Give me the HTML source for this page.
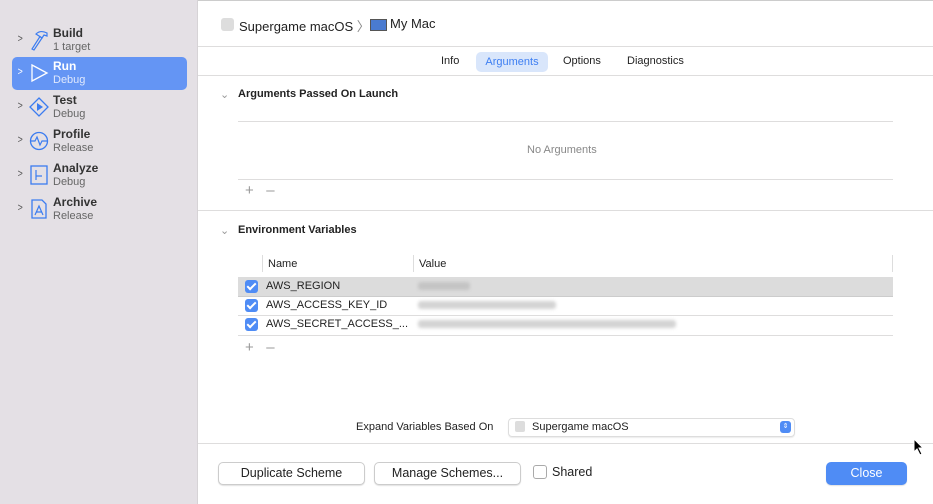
<!DOCTYPE html>
<html><head><style>
body{margin:0;width:933px;height:504px;overflow:hidden;font-family:"Liberation Sans",sans-serif;background:#fff;position:relative;color:#222}
.a{position:absolute}
.side{left:0;top:0;width:197px;height:504px;background:#e4e0e5;border-right:1px solid #d6d3d6}
.it{position:absolute;left:12px;width:175px;height:33px;border-radius:5px}
.it .t{position:absolute;left:41px;top:2px;font-size:12px;font-weight:bold;color:#333}
.it .s{position:absolute;left:41px;top:17px;font-size:11px;color:#666}
.it .c{position:absolute;left:5px;top:9px;font-size:11px;color:#555;transform:scaleX(.8)}
.it svg{position:absolute;left:17px;top:5px}
.sel{background:#6495f4}
.sel .t,.sel .s,.sel .c{color:#fff}
.sel .s{color:#dfe8fd}
.hl{background:#dedddd;height:1px}
.f12{font-size:12px}
.f11{font-size:11px}
.btn{position:absolute;top:462px;height:21px;border:1px solid #ccc;border-radius:5px;background:#fff;box-shadow:0 1px 1px rgba(0,0,0,.12);font-size:12.5px;text-align:center;line-height:21px;color:#222}
.cb{position:absolute;left:245px;width:13px;height:13px;background:#4f8cf5;border-radius:3px}
.cb:after{content:"";position:absolute;left:4px;top:1px;width:3px;height:7px;border:solid #fff;border-width:0 2px 2px 0;transform:rotate(45deg)}
.blur{position:absolute;height:8px;background:#d4d4d4;filter:blur(1.5px);border-radius:3px}
</style></head><body>
<div class="a" style="left:0;top:0;width:933px;height:1px;background:#ccc"></div>
<div class="a side"></div>
<div class="it" style="top:24px"><span class="c">&gt;</span><svg width="20" height="22" viewBox="0 0 20 22"><path d="M3 20 L5 21 L13 9 L11 7.5 Z" fill="none" stroke="#3b7cf0" stroke-width="1.2"/><path d="M7 5 C10 2 14 2 18 4 L18 7 L15 6 L13 9 L10 7 Z" fill="none" stroke="#3b7cf0" stroke-width="1.2"/></svg><div class="t">Build</div><div class="s">1 target</div></div>
<div class="it sel" style="top:57px"><span class="c">&gt;</span><svg width="20" height="22" viewBox="0 0 20 22"><path d="M3 3 L18 11 L3 19 Z" fill="none" stroke="#fff" stroke-width="1.3"/></svg><div class="t">Run</div><div class="s">Debug</div></div>
<div class="it" style="top:91px"><span class="c">&gt;</span><svg width="20" height="22" viewBox="0 0 20 22"><path d="M10 2 L19 11 L10 20 L1 11 Z" fill="none" stroke="#3b7cf0" stroke-width="1.3"/><path d="M8 7 L14 11 L8 15Z" fill="#3b7cf0"/></svg><div class="t">Test</div><div class="s">Debug</div></div>
<div class="it" style="top:125px"><span class="c">&gt;</span><svg width="20" height="22" viewBox="0 0 20 22"><circle cx="10" cy="11" r="8.5" fill="none" stroke="#3b7cf0" stroke-width="1.3"/><path d="M2 11 L6 11 L8 7 L11 15 L13 11 L18 11" fill="none" stroke="#3b7cf0" stroke-width="1.2"/></svg><div class="t">Profile</div><div class="s">Release</div></div>
<div class="it" style="top:159px"><span class="c">&gt;</span><svg width="20" height="22" viewBox="0 0 20 22"><rect x="2" y="2" width="16" height="18" fill="none" stroke="#3b7cf0" stroke-width="1.3"/><path d="M7 6 V16 M7 12 H13" fill="none" stroke="#3b7cf0" stroke-width="1.2"/></svg><div class="t">Analyze</div><div class="s">Debug</div></div>
<div class="it" style="top:193px"><span class="c">&gt;</span><svg width="20" height="22" viewBox="0 0 20 22"><path d="M3 2 H13 L17 6 V20 H3 Z" fill="none" stroke="#3b7cf0" stroke-width="1.3"/><path d="M6 17 L10 8 L14 17 M7 14 H13" fill="none" stroke="#3b7cf0" stroke-width="1.2"/></svg><div class="t">Archive</div><div class="s">Release</div></div>

<div class="a" style="left:221px;top:18px;width:13px;height:13px;background:#ddd;border-radius:3px"></div>
<div class="a" style="left:239px;top:16px;font-size:13px">Supergame macOS <span style="color:#888">〉</span></div>
<div class="a" style="left:370px;top:19px;width:15px;height:10px;background:#4a7bd0;border:1px solid #555"></div>
<div class="a" style="left:390px;top:16px;font-size:13px">My Mac</div>
<div class="a hl" style="left:198px;top:46px;width:735px"></div>
<div class="a f11" style="left:441px;top:55px">Info</div>
<div class="a f11" style="left:476px;top:52px;width:72px;height:20px;background:#d9e6fb;border-radius:5px;color:#3d7ef2;text-align:center;line-height:20px">Arguments</div>
<div class="a f11" style="left:563px;top:55px">Options</div>
<div class="a f11" style="left:627px;top:55px">Diagnostics</div>
<div class="a hl" style="left:198px;top:75px;width:735px"></div>

<div class="a f11" style="left:220px;top:88px;color:#999">⌄</div>
<div class="a f11" style="left:238px;top:88px;font-weight:bold">Arguments Passed On Launch</div>
<div class="a hl" style="left:238px;top:121px;width:655px"></div>
<div class="a f11" style="left:527px;top:144px;color:#888">No Arguments</div>
<div class="a hl" style="left:238px;top:179px;width:655px"></div>
<div class="a" style="left:245px;top:182px;font-size:15px;color:#999">+&nbsp;&nbsp;&nbsp;–</div>
<div class="a hl" style="left:198px;top:210px;width:735px"></div>

<div class="a f11" style="left:220px;top:224px;color:#999">⌄</div>
<div class="a f11" style="left:238px;top:224px;font-weight:bold">Environment Variables</div>
<div class="a" style="left:262px;top:255px;width:1px;height:17px;background:#ddd"></div>
<div class="a" style="left:413px;top:255px;width:1px;height:17px;background:#ddd"></div>
<div class="a" style="left:892px;top:255px;width:1px;height:17px;background:#ddd"></div>
<div class="a f11" style="left:268px;top:258px">Name</div>
<div class="a f11" style="left:419px;top:258px">Value</div>
<div class="a" style="left:238px;top:277px;width:655px;height:19px;background:#dcdcdc"></div>
<div class="a hl" style="left:238px;top:296px;width:655px;background:#ccc"></div>
<div class="a hl" style="left:238px;top:315px;width:655px"></div>
<div class="a hl" style="left:238px;top:335px;width:655px"></div>
<div class="cb" style="top:280px"></div><div class="cb" style="top:299px"></div><div class="cb" style="top:318px"></div>
<div class="a f11" style="left:266px;top:280px">AWS_REGION</div>
<div class="a f11" style="left:266px;top:299px">AWS_ACCESS_KEY_ID</div>
<div class="a f11" style="left:266px;top:318px">AWS_SECRET_ACCESS_...</div>
<div class="blur" style="left:418px;top:282px;width:52px;background:#c4c4c4"></div>
<div class="blur" style="left:418px;top:301px;width:138px"></div>
<div class="blur" style="left:418px;top:320px;width:258px"></div>
<div class="a" style="left:245px;top:339px;font-size:15px;color:#999">+&nbsp;&nbsp;&nbsp;–</div>

<div class="a f11" style="left:356px;top:421px">Expand Variables Based On</div>
<div class="a" style="left:508px;top:418px;width:285px;height:17px;border:1px solid #ddd;border-radius:4px;box-shadow:0 1px 1px rgba(0,0,0,.08)"></div>
<div class="a" style="left:515px;top:421px;width:10px;height:11px;background:#ddd;border-radius:2px"></div>
<div class="a f11" style="left:532px;top:421px">Supergame macOS</div>
<div class="a" style="left:780px;top:421px;width:11px;height:12px;background:#4f8cf5;border-radius:3px;color:#fff;font-size:7px;text-align:center;line-height:12px">⇕</div>
<div class="a hl" style="left:198px;top:443px;width:735px"></div>

<div class="btn" style="left:218px;width:145px">Duplicate Scheme</div>
<div class="btn" style="left:374px;width:145px">Manage Schemes...</div>
<div class="a" style="left:533px;top:465px;width:12px;height:12px;border:1px solid #aaa;border-radius:3px"></div>
<div class="a" style="left:552px;top:465px;font-size:12.5px">Shared</div>
<div class="btn" style="left:826px;width:79px;background:#4f8cf5;border-color:#4f8cf5;color:#fff">Close</div>
<svg class="a" style="left:913px;top:438px" width="12" height="18" viewBox="0 0 12 18"><path d="M1 1 L1 14 L4 11 L7 17 L9 16 L6 10 L10 10 Z" fill="#000" stroke="#fff" stroke-width="1"/></svg>
</body></html>
